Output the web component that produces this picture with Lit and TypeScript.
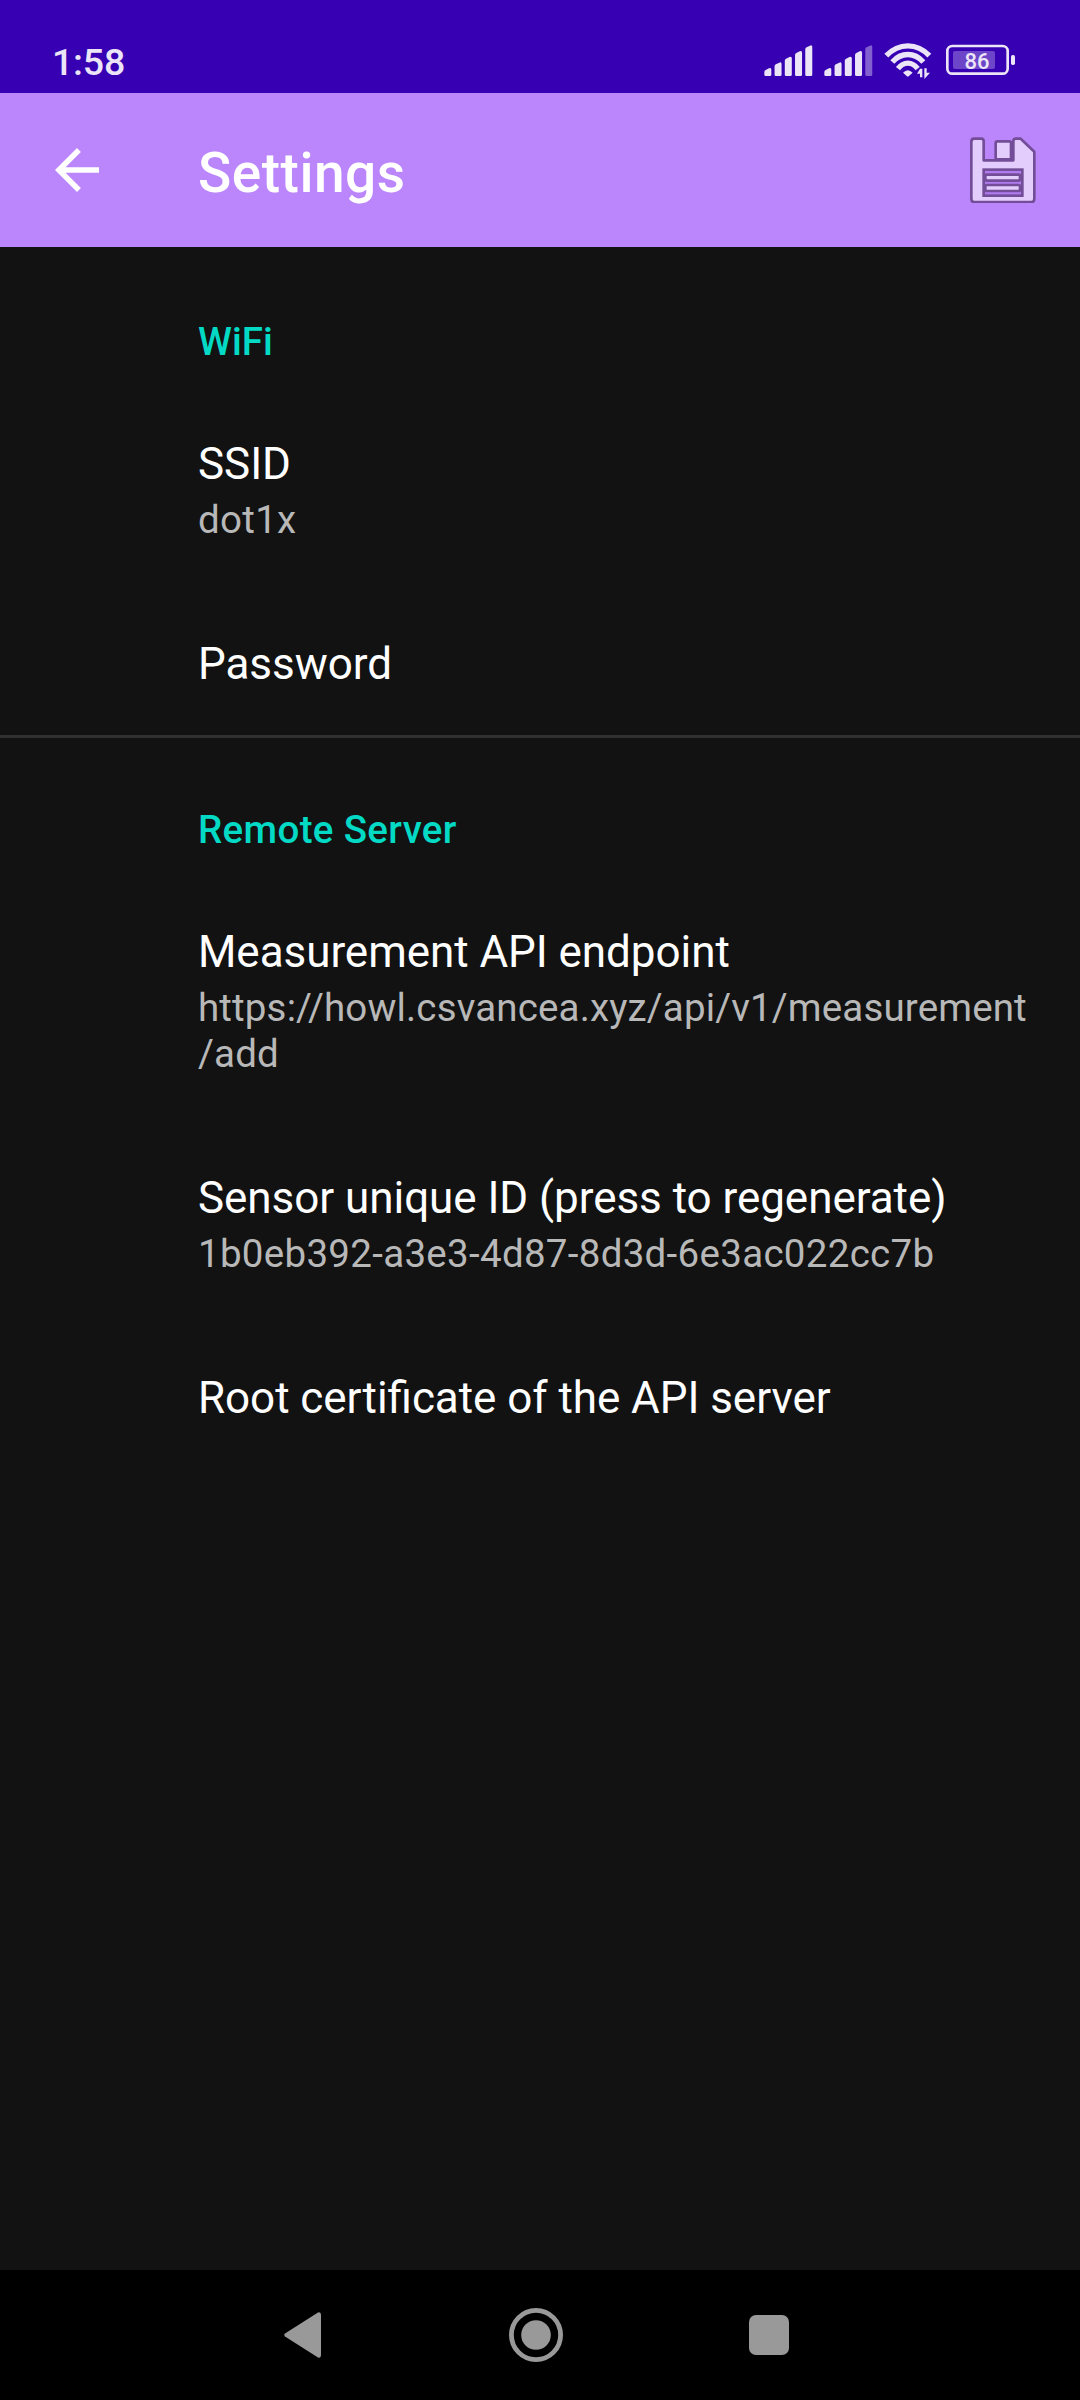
import { LitElement, html, css, svg, nothing } from "lit";
import { customElement, property } from "lit/decorators.js";

const FONT = css`Roboto, "Noto Sans", sans-serif`;

@customElement("status-bar")
class StatusBar extends LitElement {
  @property() time = "";
  @property() battery = "";

  static styles = css`
    :host { display: block; }
    .bar {
      box-sizing: border-box;
      height: 93px;
      padding: 29px 64px 0 52px;
      display: flex;
      justify-content: space-between;
      align-items: flex-start;
      background: #3700b3;
      color: #ebe5f7;
      font: 500 37.5px/46px ${FONT};
    }
    .time { padding-top: 10px; letter-spacing: -0.2px; }
    .icons { display: block; width: 256px; height: 64px; padding-top: 1px; }
    .level { font: 500 66px ${FONT}; }
  `;

  // Slant-topped signal bars; the last one may be dimmed.
  private signal(x: number, dimLast: boolean) {
    const tops = [114, 97, 80, 63, 46];
    return tops.map((t, i) => {
      const l = x + i * 30.7;
      return svg`<path opacity=${dimLast && i === 4 ? 0.42 : 1}
        d="M${l} ${t + 12}Q${l} ${t + 8} ${l + 4} ${t + 6}L${l + 14} ${t + 1}Q${l + 21} ${t - 2} ${l + 21} ${t + 5}V134Q${l + 21} 138 ${l + 17} 138H${l + 4}Q${l} 138 ${l} 134Z"/>`;
    });
  }

  render() {
    return html`<div class="bar">
      <span class="time">${this.time}</span>
      <svg class="icons" viewBox="30 0 768 192" fill="#ebe5f7">
        ${this.signal(43, false)} ${this.signal(223, true)}
        <g fill="none" stroke="#ebe5f7" stroke-width="16">
          <path d="M409 77Q437 47.500 473.500 47.500Q510 47.500 538 77" />
          <path d="M427 96Q447 73.500 473.500 73.500Q500 73.500 520 96" />
          <path d="M444 116Q457 99.500 473.500 99.500Q490 99.500 503 116" />
        </g>
        <path d="M459 128Q473.500 113 488 128L476 139Q473.500 141 471 139Z" />
        <path d="M510 116H517V142H510V131H501Z M523 147V115H530V128H540Z" />
        <rect x="592" y="48" width="181" height="83" rx="15" fill="none" stroke="#ebe5f7" stroke-width="8" />
        <rect x="609" y="63" width="126" height="54" rx="6" opacity="0.3" />
        <rect x="783" y="75" width="12" height="30" rx="5" />
        <text class="level" x="681" y="116" text-anchor="middle">${this.battery}</text>
      </svg>
    </div>`;
  }
}

@customElement("app-toolbar")
class AppToolbar extends LitElement {
  @property() heading = "";

  static styles = css`
    :host { display: block; }
    .bar {
      box-sizing: border-box;
      height: 154px;
      padding: 0 44px;
      display: flex;
      align-items: center;
      background: #bb86fc;
      color: #fff;
    }
    .back { width: 66px; height: 66px; margin-right: 88px; }
    .title { flex: 1; margin: 0; padding-top: 6px; font: 500 55px/66px ${FONT}; letter-spacing: 0.5px; }
    .save { width: 66px; height: 66px; }
  `;

  render() {
    return html`<header class="bar">
      <svg class="back" viewBox="0 0 24 24" fill="#fff">
        <path d="M20 11H7.830l5.590-5.590L12 4l-8 8 8 8 1.410-1.410L7.830 13H20v-2z" />
      </svg>
      <h1 class="title">${this.heading}</h1>
      <svg class="save" viewBox="60 51 198 198" fill="#e2cdfc" stroke="#734d97" stroke-width="8" stroke-linejoin="round">
        <path d="M73 56H93Q101 56 101 64V121H190V64Q190 56 198 56H212L253 95V237Q253 246 244 246H73Q64 246 64 237V65Q64 56 73 56Z" />
        <rect x="137" y="64" width="46" height="54" rx="5" />
        <rect x="101" y="149" width="116" height="78" fill="#b07cf0" stroke-linejoin="miter" />
        <rect x="106" y="164" width="104" height="18" rx="4" />
        <rect x="106" y="195" width="104" height="18" rx="4" />
      </svg>
    </header>`;
  }
}

@customElement("preference-category")
class PreferenceCategory extends LitElement {
  @property() heading = "";
  @property({ type: Boolean }) divided = false;

  static styles = css`
    :host { display: block; }
    .head {
      box-sizing: border-box;
      height: 141px;
      padding: 69px 44px 0 198px;
      border-top: 3px solid transparent;
      color: #03dac5;
      font: 500 38.5px/46px ${FONT};
    }
    .divided { border-top-color: #303030; letter-spacing: 0.35px; }
    .text { margin: 0; font: inherit; }
  `;

  render() {
    return html`<section>
      <div class="head ${this.divided ? "divided" : ""}"><h2 class="text">${this.heading}</h2></div>
      <slot></slot>
    </section>`;
  }
}

@customElement("preference-item")
class PreferenceItem extends LitElement {
  @property() label = "";
  @property() summary = "";

  static styles = css`
    :host { display: block; }
    .item { padding: 50px 44px 45px 198px; }
    .label {
      color: #fff;
      font: 400 44px/52px ${FONT};
      letter-spacing: -0.05px;
      font-feature-settings: "liga" 1;
    }
    .summary {
      margin-top: 7px;
      color: #b8b8b8;
      font: 400 38.5px/46px ${FONT};
      letter-spacing: 0.3px;
      overflow-wrap: anywhere;
    }
    .url { letter-spacing: 0.15px; }
  `;

  render() {
    // A URL may break before its last path separator.
    const isUrl = this.summary.startsWith("http");
    const cut = isUrl ? this.summary.lastIndexOf("/") : this.summary.length;
    return html`<div class="item">
      <div class="label">${this.label}</div>
      ${this.summary
        ? html`<div class="summary ${isUrl ? "url" : ""}">${this.summary.slice(0, cut)}<wbr>${this.summary.slice(cut)}</div>`
        : nothing}
    </div>`;
  }
}

@customElement("navigation-bar")
class NavigationBar extends LitElement {
  static styles = css`
    :host { display: block; }
    .bar {
      box-sizing: border-box;
      height: 130px;
      padding: 0 291px 0 284px;
      display: flex;
      align-items: center;
      justify-content: space-between;
      background: #000;
    }
    .back { width: 37px; height: 46px; }
    .home { width: 54px; height: 54px; margin-left: 2px; }
    .recent { width: 40px; height: 40px; }
  `;

  render() {
    return html`<nav class="bar">
      <svg class="back" viewBox="0 0 37 46" fill="#999">
        <path d="M1 21.500L34 .5Q37-.5 37 3V43Q37 46.500 34 45.500L1 24.500Q-.5 23 1 21.500Z" />
      </svg>
      <svg class="home" viewBox="0 0 54 54" fill="#999">
        <circle cx="27" cy="27" r="24.600" fill="none" stroke="#999" stroke-width="4.800" />
        <circle cx="27" cy="27" r="14.800" />
      </svg>
      <svg class="recent" viewBox="0 0 40 40" fill="#999"><rect width="40" height="40" rx="7" /></svg>
    </nav>`;
  }
}

@customElement("app-root")
class AppRoot extends LitElement {
  static styles = css`
    :host { display: block; }
    .screen {
      display: flex;
      flex-direction: column;
      width: 1080px;
      height: 2400px;
      overflow: hidden;
      background: #121212;
    }
    .content { flex: 1; }
  `;

  render() {
    return html`<div class="screen">
      <status-bar time="1:58" battery="86"></status-bar>
      <app-toolbar heading="Settings"></app-toolbar>
      <main class="content">
        <preference-category heading="WiFi">
          <preference-item label="SSID" summary="dot1x"></preference-item>
          <preference-item label="Password"></preference-item>
        </preference-category>
        <preference-category heading="Remote Server" divided>
          <preference-item
            label="Measurement API endpoint"
            summary="https://howl.csvancea.xyz/api/v1/measurement/add"
          ></preference-item>
          <preference-item
            label="Sensor unique ID (press to regenerate)"
            summary="1b0eb392-a3e3-4d87-8d3d-6e3ac022cc7b"
          ></preference-item>
          <preference-item label="Root certificate of the API server"></preference-item>
        </preference-category>
      </main>
      <navigation-bar></navigation-bar>
    </div>`;
  }
}
